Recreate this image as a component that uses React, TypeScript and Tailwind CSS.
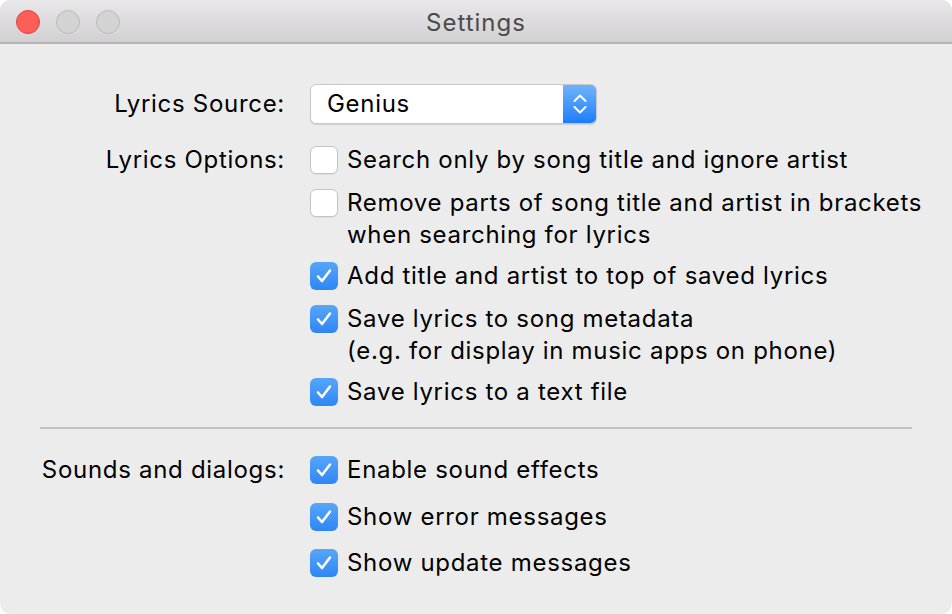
import React from 'react'

const font = { fontFamily: 'Inter, "Noto Sans", "Liberation Sans", sans-serif' }

function Check({ on }: { on: boolean }) {
  return on ? (
    <span className="mt-[2px] flex h-[28px] w-[28px] shrink-0 items-center justify-center rounded-[6px] bg-gradient-to-b from-[#56a6f9] to-[#2e86f6]">
      <svg width="18" height="16" viewBox="0 0 18 16" fill="none">
        <path d="M3 8.5 L7 13 L15 2.5" stroke="white" strokeWidth="2.6" strokeLinecap="round" strokeLinejoin="round" />
      </svg>
    </span>
  ) : (
    <span className="mt-[2px] h-[28px] w-[28px] shrink-0 rounded-[6px] border border-[#c4c4c4] bg-white shadow-[0_1px_1px_rgba(0,0,0,0.06)]" />
  )
}

function Option({ on, lines, className = '' }: { on: boolean; lines: string[]; className?: string }) {
  return (
    <div className={`flex items-start gap-[9px] ${className}`}>
      <Check on={on} />
      <div className="leading-[32px]">
        {lines.map(l => (
          <div key={l}>{l}</div>
        ))}
      </div>
    </div>
  )
}

const LYRICS = [
  { on: false, mt: '', lines: ['Search only by song title and ignore artist'] },
  { on: false, mt: 'mt-[11px]', lines: ['Remove parts of song title and artist in brackets', 'when searching for lyrics'] },
  { on: true, mt: 'mt-[9px]', lines: ['Add title and artist to top of saved lyrics'] },
  { on: true, mt: 'mt-[11px]', lines: ['Save lyrics to song metadata', '(e.g. for display in music apps on phone)'] },
  { on: true, mt: 'mt-[9px]', lines: ['Save lyrics to a text file'] },
]

const SOUNDS = [
  { label: 'Enable sound effects', mt: '' },
  { label: 'Show error messages', mt: 'mt-[15px]' },
  { label: 'Show update messages', mt: 'mt-[14px]' },
]

export default function App() {
  return (
    <div className="h-[614px] w-[952px] bg-white" style={font}>
      <div className="flex h-full flex-col overflow-hidden rounded-[10px] bg-[#ececec]">
        {/* title bar */}
        <div className="relative flex h-[44px] shrink-0 items-center justify-center border-b-2 border-[#b4b4b4] bg-gradient-to-b from-[#e9e7e9] to-[#d2d0d2] pt-[3px]">
          <div className="absolute left-[16px] top-[10px] flex gap-[16px]">
            <span className="h-[24px] w-[24px] rounded-full border border-[#e0443e] bg-[#fd5f57]" />
            <span className="h-[24px] w-[24px] rounded-full border border-[#b9b9b9] bg-[#d3d3d3]" />
            <span className="h-[24px] w-[24px] rounded-full border border-[#b9b9b9] bg-[#d3d3d3]" />
          </div>
          <span className="text-[24px] tracking-[1px] text-[#4b4b4b]">Settings</span>
        </div>

        <div className="flex flex-col pt-[40px] text-[24px] tracking-[0.7px] text-black">
          {/* Lyrics source */}
          <div className="flex items-center">
            <div className="w-[285px] text-right">Lyrics Source:</div>
            <div className="ml-[25px] flex h-[40px] w-[287px] overflow-hidden rounded-[6px] border border-[#c8c8c8] bg-white shadow-[0_1px_1px_rgba(0,0,0,0.12)]">
              <div className="flex flex-1 items-center pl-[16px]">Genius</div>
              <div className="flex w-[33px] flex-col items-center justify-center gap-[4px] bg-gradient-to-b from-[#6db3fb] to-[#1b7cfc]">
                <svg width="14" height="8" viewBox="0 0 14 8" fill="none">
                  <path d="M1.5 7 L7 1.5 L12.5 7" stroke="white" strokeWidth="2" strokeLinecap="round" strokeLinejoin="round" />
                </svg>
                <svg width="14" height="8" viewBox="0 0 14 8" fill="none">
                  <path d="M1.5 1 L7 6.5 L12.5 1" stroke="white" strokeWidth="2" strokeLinecap="round" strokeLinejoin="round" />
                </svg>
              </div>
            </div>
          </div>

          {/* Lyrics options */}
          <div className="mt-[20px] flex">
            <div className="w-[285px] text-right leading-[32px]">Lyrics Options:</div>
            <div className="ml-[25px] flex flex-col">
              {LYRICS.map(o => (
                <Option key={o.lines[0]} on={o.on} lines={o.lines} className={o.mt} />
              ))}
            </div>
          </div>

          <div className="mx-[40px] mt-[19px] h-[2px] bg-[#c3c3c3]" />

          {/* Sounds */}
          <div className="mt-[25px] flex">
            <div className="w-[285px] text-right leading-[32px]">Sounds and dialogs:</div>
            <div className="ml-[25px] flex flex-col">
              {SOUNDS.map(s => (
                <Option key={s.label} on lines={[s.label]} className={s.mt} />
              ))}
            </div>
          </div>
        </div>
      </div>
    </div>
  )
}
